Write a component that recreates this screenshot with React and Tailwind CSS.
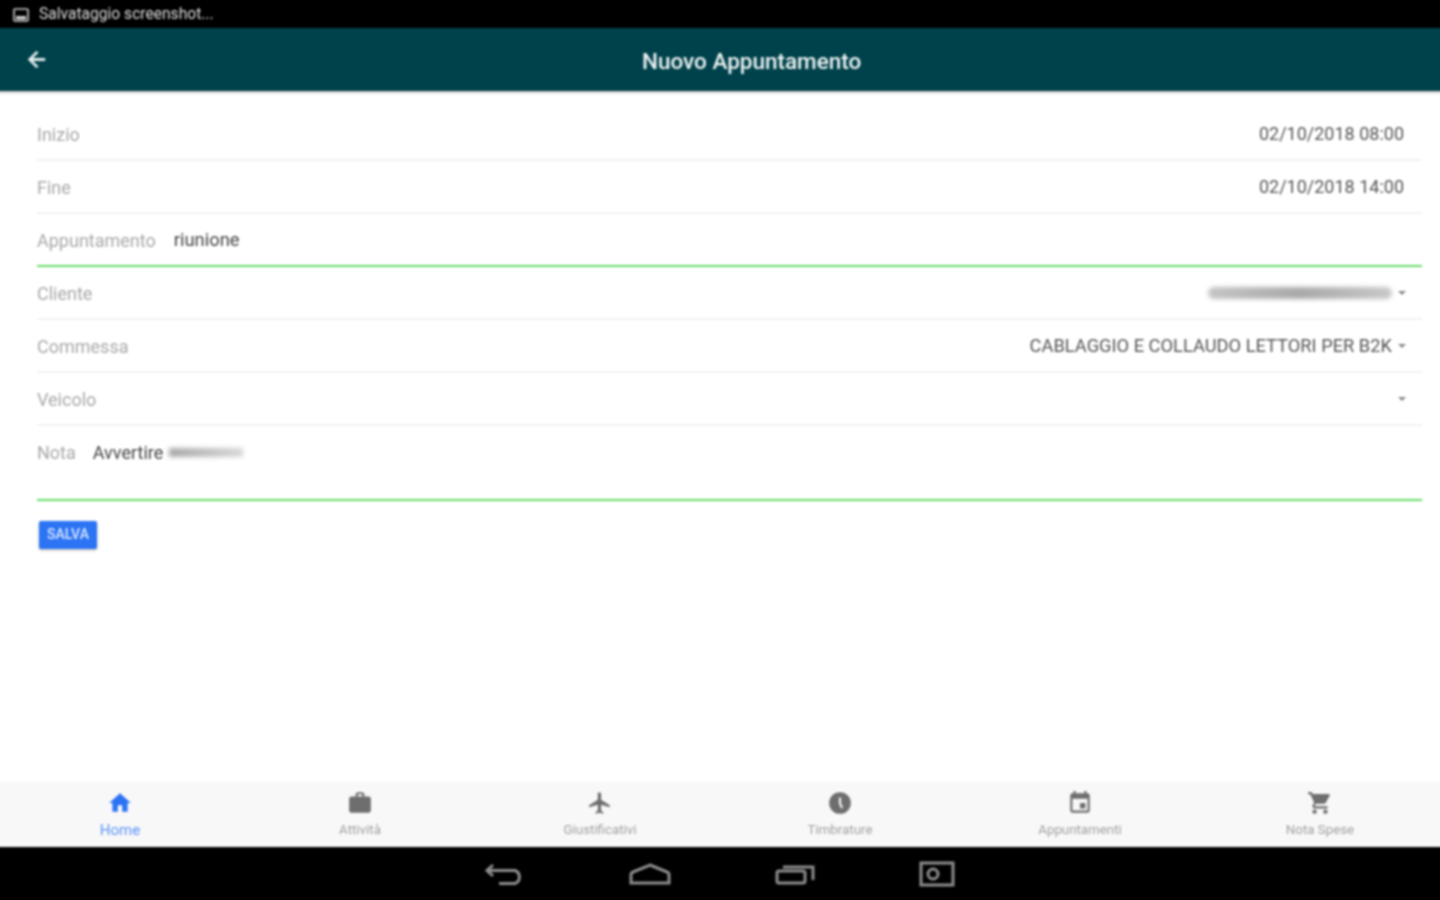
import React from 'react'

const font = { fontFamily: 'Roboto, sans-serif' }

const tabs = [
  { label: 'Home', active: true, d: 'M10 20v-6h4v6h5v-8h3L12 3 2 12h3v8z' },
  { label: 'Attività', d: 'M20 6h-4V4c0-1.11-.89-2-2-2h-4c-1.11 0-2 .89-2 2v2H4c-1.11 0-1.99.89-1.99 2L2 19c0 1.11.89 2 2 2h16c1.11 0 2-.89 2-2V8c0-1.11-.89-2-2-2zm-6 0h-4V4h4v2z' },
  { label: 'Giustificativi', d: 'M21 16v-2l-8-5V3.5c0-.83-.67-1.5-1.5-1.5S10 2.67 10 3.5V9l-8 5v2l8-2.5V19l-2 1.5V22l3.5-1 3.5 1v-1.5L13 19v-5.5l8 2.5z' },
  { label: 'Timbrature', d: 'M12 2a10 10 0 1 0 0 20 10 10 0 0 0 0-20zm1 5v5.2l1.8 4-1.8.8-2-4.6V7h2z' },
  { label: 'Appuntamenti', d: 'M17 12h-5v5h5v-5zM16 1v2H8V1H6v2H5c-1.11 0-1.99.9-1.99 2L3 19c0 1.1.89 2 2 2h14c1.1 0 2-.9 2-2V5c0-1.1-.9-2-2-2h-1V1h-2zm3 18H5V8h14v11z' },
  { label: 'Nota Spese', d: 'M7 18c-1.1 0-1.99.9-1.99 2S5.9 22 7 22s2-.9 2-2-.9-2-2-2zM1 2v2h2l3.6 7.59-1.35 2.45c-.16.28-.25.61-.25.96 0 1.1.9 2 2 2h12v-2H7.42c-.14 0-.25-.11-.25-.25l.03-.12.9-1.83h7.45c.75 0 1.41-.41 1.75-1.03l3.58-6.49c.08-.14.12-.31.12-.48 0-.55-.45-1-1-1H5.21l-.94-2H1zm16 16c-1.1 0-1.99.9-1.99 2s.89 2 1.99 2 2-.9 2-2-.9-2-2-2z' },
]

const Caret = () => (
  <span className="ml-[6px] mr-[16px] w-0 h-0 border-x-[4px] border-x-transparent border-t-[4px] border-t-[#888]" />
)

const Row = ({ label, children, green }) => (
  <div className={`h-[53px] flex items-center pt-[1px] border-b-2 ${green ? 'border-[#66dd66]' : 'border-[#f2f2f2]'}`}>
    <span className="text-[#a8a8a8] whitespace-nowrap">{label}</span>
    {children}
  </div>
)

const Value = ({ children }) => (
  <span className="ml-auto mr-[18px] -mt-[2px] text-[#555] whitespace-nowrap">{children}</span>
)

export default function App() {
  return (
    <div className="w-[1440px] h-[900px] overflow-hidden">
      {/* 4px bleed on every side so the blur doesn't fade out at the page edge */}
      <div style={font} className="w-[1448px] h-[908px] -m-[4px] flex flex-col bg-white text-[18px] blur-[0.8px]">
        <div className="h-[32px] bg-black flex items-center pt-[6px] pl-[17px] shrink-0">
          <svg width="16" height="14" viewBox="0 0 16 14">
            <rect x="1" y="1" width="14" height="12" rx="1" fill="none" stroke="#ccc" strokeWidth="1.6" />
            <rect x="3" y="8" width="10" height="3.5" fill="#ccc" />
          </svg>
          <span className="ml-[10px] text-[15.6px] text-[#ddd]">Salvataggio screenshot...</span>
        </div>

        <div className="h-[63px] bg-[#00424b] flex items-center shrink-0 relative shadow-[0_1px_3px_rgba(0,0,0,0.35)]">
          <svg className="ml-[28px]" width="25" height="25" viewBox="0 0 24 24" fill="#e8f0f0" stroke="#e8f0f0" strokeWidth="0.8">
            <path d="M20 11H7.83l5.59-5.59L12 4l-8 8 8 8 1.41-1.41L7.83 13H20v-2z" />
          </svg>
          <span className="ml-[593px] pt-[4px] text-[22.5px] font-medium text-[#eef4f4] whitespace-nowrap">Nuovo Appuntamento</span>
        </div>

        <div className="flex-1 pl-[41px] pr-[22px] pt-[17px]">
          <Row label="Inizio"><Value>02/10/2018 08:00</Value></Row>
          <Row label="Fine"><Value>02/10/2018 14:00</Value></Row>
          <Row label="Appuntamento" green>
            <span className="ml-[18px] text-[18.4px] text-[#444]">riunione</span>
          </Row>
          <Row label="Cliente">
            <span className="ml-auto w-[184px] h-[12px] rounded-full bg-gradient-to-r from-[#c4c4c4] via-[#a8a8a8] to-[#c8c8c8] blur-[2px]" />
            <Caret />
          </Row>
          <Row label="Commessa">
            <span className="ml-auto text-[18.3px] text-[#555] whitespace-nowrap">CABLAGGIO E COLLAUDO LETTORI PER B2K</span>
            <Caret />
          </Row>
          <Row label="Veicolo">
            <span className="ml-auto" />
            <Caret />
          </Row>
          <div className="h-[75px] flex pt-[13px] border-b-2 border-[#66dd66]">
            <span className="text-[#a8a8a8]">Nota</span>
            <span className="ml-[17px] text-[#444]">Avvertire</span>
            <span className="ml-[6px] mt-[9px] w-[74px] h-[9px] bg-gradient-to-r from-[#a8a8a8] to-[#d8d8d8] blur-[2px]" />
          </div>
          <button className="mt-[20px] ml-[2px] w-[58px] h-[28px] pb-[2px] rounded-[2px] bg-[#2c74f4] text-[#dce8ff] text-[14px] font-medium shadow-[0_1px_3px_rgba(0,0,0,0.3)]">
            SALVA
          </button>
        </div>

        <div className="h-[65px] px-[4px] bg-[#f8f8f8] grid grid-cols-6 shrink-0">
          {tabs.map((t) => (
            <div key={t.label} className="flex flex-col items-center pt-[8px]">
              <svg width="26" height="26" viewBox="0 0 24 24" fill={t.active ? '#2c74f4' : '#6e6e6e'}>
                <path fillRule="evenodd" d={t.d} />
              </svg>
              <span className={`mt-[5px] whitespace-nowrap ${t.active ? 'text-[15px] leading-[18px] text-[#5c95f6]' : 'text-[13.3px] leading-[18px] text-[#a0a0a0]'}`}>{t.label}</span>
            </div>
          ))}
        </div>

        <div className="h-[57px] bg-black flex items-center justify-center shrink-0 pb-[3px]">
          <div className="flex items-center gap-[104px] text-[#8c8c8c]">
            <svg width="40" height="26" viewBox="0 0 40 26" fill="none" stroke="currentColor" strokeWidth="3">
              <path d="M8 4 2 9.5 8 15M2 9.5h28a7 7 0 0 1 0 13H14" />
            </svg>
            <svg width="42" height="22" viewBox="0 0 42 22" fill="none" stroke="currentColor" strokeWidth="3">
              <path d="M21 2 38 9a3 3 0 0 1 2 3v8H2v-8a3 3 0 0 1 2-3z" />
            </svg>
            <svg width="40" height="22" viewBox="0 0 40 22" fill="none" stroke="currentColor" strokeWidth="3">
              <rect x="2" y="8" width="28" height="12" rx="2" />
              <path d="M8 4h30v13" />
            </svg>
            <svg width="36" height="26" viewBox="0 0 36 26" fill="none" stroke="currentColor" strokeWidth="3">
              <rect x="2" y="2" width="32" height="22" />
              <circle cx="14" cy="13" r="5" />
            </svg>
          </div>
        </div>
      </div>
    </div>
  )
}
